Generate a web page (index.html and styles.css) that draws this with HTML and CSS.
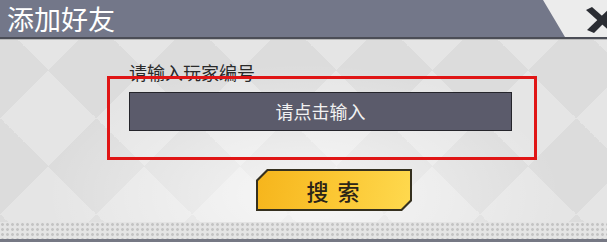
FILE: index.html
```html
<!DOCTYPE html>
<html lang="zh-CN">
<head>
    <meta charset="UTF-8">
    <meta name="viewport" content="width=device-width, initial-scale=1.0">
    <title>添加好友</title>
    <link rel="stylesheet" href="styles.css">
</head>
<body>

<div class="dialog">
    <!-- Заголовок окна -->
    <div class="dialog-header">
        <div class="title-bar">添加好友</div>
        <div class="close-btn">
            <svg width="36" height="32" viewBox="0 0 36 32">
                <path d="M1 7 L7 4 L34 28 L28 31 Z" fill="#2b2d33"/>
                <path d="M35 4 L29 1 L2 27 L9 30 Z" fill="#2b2d33"/>
            </svg>
        </div>
    </div>
    <div class="header-line"></div>

    <div class="dialog-body">
        <div class="field-label">请输入玩家编号</div>
        <div class="field-input">请点击输入</div>
        <div class="search-btn"><span class="search-btn-inner">搜&nbsp;索</span></div>
    </div>

    <div class="dialog-footer"></div>
    <div class="footer-line"></div>

    <!-- Красная рамка-выделение -->
    <div class="highlight"></div>
</div>

</body>
</html>
```

FILE: styles.css
```css
body {
    margin: 0;
    padding: 0;
    width: 607px;
    height: 242px;
    overflow: hidden;
    font-family: "Noto Sans CJK SC", "Noto Sans", sans-serif;
    background-color: #e2e2e2;
}
.dialog {
    position: relative;
    height: 242px;
    display: flex;
    flex-direction: column;
}
.dialog-header {
    height: 37px;
    display: flex;
    background-color: #ececec;
}
.title-bar {
    width: 565px;
    background-color: #737789;
    clip-path: polygon(0 0, calc(100% - 22px) 0, 100% 100%, 0 100%);
    color: #fff;
    font-size: 27px;
    line-height: 37px;
    padding-left: 7px;
    box-sizing: border-box;
}
.close-btn {
    flex: 1;
    display: flex;
    align-items: center;
    overflow: hidden;
    padding-left: 20px;
}
.close-btn svg {
    flex: none;
}
.header-line {
    height: 2px;
    background-color: #4b4d56;
    border-bottom: 1px solid #b9b9b9;
}
.dialog-body {
    flex: 1;
    padding: 21px 0 0 129px;
    background-color: #e0e0e0;
    background-image:
        radial-gradient(ellipse at 50% 85%, rgba(255, 255, 255, 0.7), rgba(255, 255, 255, 0) 60%),
        conic-gradient(from 45deg, #e5e5e5 25%, #dcdcdc 0 50%, #e5e5e5 0 75%, #dcdcdc 0);
    background-size: 100% 100%, 96px 96px;
    background-position: 0 0, 48px 30px;
}
.field-label {
    font-size: 18px;
    line-height: 22px;
    color: #2a2a2a;
}
.field-input {
    margin-top: 9px;
    width: 383px;
    height: 39px;
    box-sizing: border-box;
    background-color: #5b5b6b;
    border: 1px solid #25252b;
    color: #f2f2f2;
    font-size: 18px;
    line-height: 37px;
    text-align: center;
}
.search-btn {
    margin: 38px 0 0 127px;
    width: 156px;
    height: 42px;
    padding: 2px;
    box-sizing: border-box;
    background-color: #35301f;
    clip-path: polygon(11px 0, 100% 0, 100% calc(100% - 10px), calc(100% - 10px) 100%, 0 100%, 0 11px);
}
.search-btn-inner {
    display: block;
    height: 100%;
    background: linear-gradient(100deg, #f6b51c 0%, #fbc733 50%, #fed94e 100%);
    clip-path: polygon(10px 0, 100% 0, 100% calc(100% - 9px), calc(100% - 9px) 100%, 0 100%, 0 10px);
    color: #2b2418;
    font-size: 22px;
    font-weight: 500;
    line-height: 38px;
    text-align: center;
    letter-spacing: 2px;
}
.dialog-footer {
    height: 17px;
    background-color: #e4e4e4;
    background-image: radial-gradient(circle, #c4c4c4 1.2px, transparent 1.6px);
    background-size: 5px 5px;
}
.footer-line {
    height: 3px;
    background-color: #767884;
}
.highlight {
    position: absolute;
    left: 107px;
    top: 76px;
    width: 430px;
    height: 84px;
    box-sizing: border-box;
    border: 3px solid #e01515;
}
```
